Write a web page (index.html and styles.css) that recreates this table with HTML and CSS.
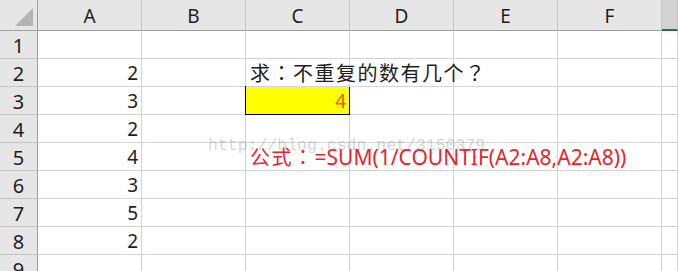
FILE: index.html
```html
<!DOCTYPE html>
<html>
<head>
<meta charset="utf-8">
<link rel="stylesheet" href="styles.css">
</head>
<body>
<div class="sheet">
  <div class="grid">
    <div class="hd corner"><span class="tri"></span></div>
    <div class="hd col">A</div>
    <div class="hd col">B</div>
    <div class="hd col">C</div>
    <div class="hd col">D</div>
    <div class="hd col">E</div>
    <div class="hd col">F</div>
    <div class="hd col sel"></div>

    <div class="hd row">1</div>
    <div class="c"></div><div class="c"></div><div class="c"></div><div class="c"></div><div class="c"></div><div class="c"></div><div class="c"></div>

    <div class="hd row">2</div>
    <div class="c num">2</div><div class="c"></div><div class="c txt"><span class="cjk">求<span class="colon">：</span>不重复的数有几个<span class="colon">？</span></span></div><div class="c"></div><div class="c"></div><div class="c"></div><div class="c"></div>

    <div class="hd row">3</div>
    <div class="c num">3</div><div class="c"></div><div class="c num ans">4</div><div class="c"></div><div class="c"></div><div class="c"></div><div class="c"></div>

    <div class="hd row">4</div>
    <div class="c num">2</div><div class="c"></div><div class="c"></div><div class="c"></div><div class="c"></div><div class="c"></div><div class="c"></div>

    <div class="hd row">5</div>
    <div class="c num">4</div><div class="c"></div><div class="c txt formula"><span class="cjk">公式<span class="colon">：</span></span><span class="latin">=SUM(1/COUNTIF(A2:A8,A2:A8))</span></div><div class="c"></div><div class="c"></div><div class="c"></div><div class="c"></div>

    <div class="hd row">6</div>
    <div class="c num">3</div><div class="c"></div><div class="c"></div><div class="c"></div><div class="c"></div><div class="c"></div><div class="c"></div>

    <div class="hd row">7</div>
    <div class="c num">5</div><div class="c"></div><div class="c"></div><div class="c"></div><div class="c"></div><div class="c"></div><div class="c"></div>

    <div class="hd row">8</div>
    <div class="c num">2</div><div class="c"></div><div class="c"></div><div class="c"></div><div class="c"></div><div class="c"></div><div class="c"></div>

    <div class="hd row">9</div>
    <div class="c"></div><div class="c"></div><div class="c"></div><div class="c"></div><div class="c"></div><div class="c"></div><div class="c"></div>
  </div>
  <div class="watermark">http://blog.csdn.net/3150379</div>
</div>
</body>
</html>
```
FILE: styles.css
```css
html, body {
  margin: 0;
  padding: 0;
  background: #ffffff;
  overflow: hidden;
}
.sheet {
  position: relative;
  width: 678px;
  height: 271px;
  overflow: hidden;
  font-family: "Noto Sans", "Noto Sans CJK SC", sans-serif;
}
.grid {
  display: grid;
  grid-template-columns: 38px repeat(6, 104px) 1fr;
  grid-template-rows: 31px repeat(9, 28px);
}
.grid > div {
  box-sizing: border-box;
  border-right: 1px solid #d4d4d4;
  border-bottom: 1px solid #d4d4d4;
  display: flex;
  white-space: nowrap;
  min-width: 0;
}
.hd {
  background: #e6e6e6;
  color: #1e1e1e;
}
.grid > .col {
  justify-content: center;
  align-items: center;
  font-size: 19px;
  border-right-color: #c4c4c4;
  border-bottom-color: #9e9e9e;
  padding-top: 1px;
}
.grid > .col.sel {
  background: #d2d2d2;
  border-bottom: 2px solid #217346;
}
.grid > .corner {
  position: relative;
  border-right-color: #9e9e9e;
  border-bottom-color: #9e9e9e;
}
.tri {
  position: absolute;
  left: 15px;
  top: 8px;
  width: 18px;
  height: 18px;
  background: #b4b4b4;
  clip-path: polygon(100% 0, 100% 100%, 0 100%);
}
.grid > .row {
  justify-content: center;
  align-items: center;
  font-size: 20px;
  border-right-color: #9e9e9e;
  border-bottom-color: #c4c4c4;
  padding-top: 1px;
}
.c {
  align-items: flex-end;
  font-size: 19px;
  color: #1e1e1e;
  line-height: 22px;
  padding: 0 3px 2px 4px;
}
.num {
  justify-content: flex-end;
}
.txt {
  overflow: visible;
  position: relative;
  z-index: 1;
  padding-left: 4px;
}
.cjk {
  font-family: "Noto Sans CJK SC", sans-serif;
  font-size: 20px;
  letter-spacing: 1.5px;
}
.colon {
  font-family: "Noto Sans CJK TC", sans-serif;
}
.latin {
  font-size: 21px;
}
.grid > .ans {
  background: #ffff00;
  color: #e2621a;
  border: 1px solid #000000;
  margin: -1px 0 0 -1px;
  width: calc(100% + 1px);
  height: calc(100% + 1px);
}
.formula {
  color: #e4262c;
}
.watermark {
  position: absolute;
  left: 208px;
  top: 136px;
  font-family: "Liberation Mono", monospace;
  font-size: 16.5px;
  color: rgba(160, 160, 160, 0.45);
  z-index: 2;
}
```
